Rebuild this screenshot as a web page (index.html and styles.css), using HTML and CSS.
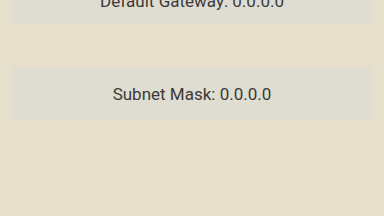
FILE: index.html
```html
<!DOCTYPE html>
<html lang="en">
<head>
    <meta charset="UTF-8">
    <meta name="viewport" content="width=device-width, initial-scale=1.0">
    <title>Network</title>
    <link rel="stylesheet" href="styles.css">
</head>
<body>
    <div class="list">
        <!-- Gateway -->
        <div class="card card-top">Default Gateway: 0.0.0.0</div>
        <!-- Subnet -->
        <div class="card">Subnet Mask: 0.0.0.0</div>
    </div>
</body>
</html>
```
FILE: styles.css
```css
body {
    margin: 0;
    padding: 0;
    background-color: #e5dfcb;
    font-family: 'Roboto', 'Liberation Sans', sans-serif;
    color: #3b3a37;
    overflow: hidden;
}
.list {
    display: flex;
    flex-direction: column;
    gap: 45px;
    padding: 0 12px;
}
.card {
    height: 52px;
    display: flex;
    align-items: center;
    justify-content: center;
    background-color: #dfdcd2;
    font-size: 17px;
}
.card-top {
    height: 44px;
    margin-top: -21px;
}
```
